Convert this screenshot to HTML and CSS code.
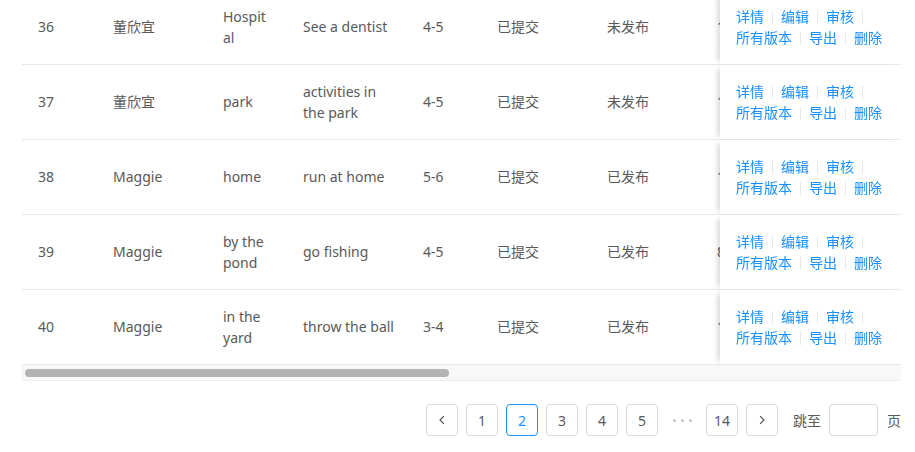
FILE: index.html
```html
<!DOCTYPE html>
<html lang="zh-CN">
<head>
<meta charset="utf-8">
<title>列表</title>
<link rel="stylesheet" href="styles.css">
</head>
<body>
<div class="page">
  <div class="table-scroll">
    <table class="data-table">
      <colgroup>
        <col class="c-id"><col class="c-name"><col class="c-place"><col class="c-act"><col class="c-age"><col class="c-status"><col class="c-pub"><col class="c-extra"><col class="c-extra"><col class="c-extra"><col class="c-extra"><col class="c-extra"><col class="c-ops">
      </colgroup>
      <tbody>
        <tr>
          <td>36</td><td>董欣宜</td><td class="wrap two">Hospital</td><td class="act">See a dentist</td><td>4-5</td><td>已提交</td><td>未发布</td><td>128</td><td>2019-08-12</td><td>英语绘本</td><td>中级</td><td>—</td>
          <td class="ops"><a href="#">详情</a><span class="divider"></span><a href="#">编辑</a><span class="divider"></span><a href="#">审核</a><span class="divider"></span><a href="#">所有版本</a><span class="divider"></span><a href="#">导出</a><span class="divider"></span><a href="#">删除</a></td>
        </tr>
        <tr>
          <td>37</td><td>董欣宜</td><td class="wrap">park</td><td class="act two">activities in the park</td><td>4-5</td><td>已提交</td><td>未发布</td><td>156</td><td>2019-08-12</td><td>英语绘本</td><td>中级</td><td>—</td>
          <td class="ops"><a href="#">详情</a><span class="divider"></span><a href="#">编辑</a><span class="divider"></span><a href="#">审核</a><span class="divider"></span><a href="#">所有版本</a><span class="divider"></span><a href="#">导出</a><span class="divider"></span><a href="#">删除</a></td>
        </tr>
        <tr>
          <td>38</td><td>Maggie</td><td class="wrap">home</td><td class="act">run at home</td><td>5-6</td><td>已提交</td><td>已发布</td><td>103</td><td>2019-08-10</td><td>英语绘本</td><td>高级</td><td>—</td>
          <td class="ops"><a href="#">详情</a><span class="divider"></span><a href="#">编辑</a><span class="divider"></span><a href="#">审核</a><span class="divider"></span><a href="#">所有版本</a><span class="divider"></span><a href="#">导出</a><span class="divider"></span><a href="#">删除</a></td>
        </tr>
        <tr>
          <td>39</td><td>Maggie</td><td class="wrap two">by the pond</td><td class="act">go fishing</td><td>4-5</td><td>已提交</td><td>已发布</td><td>89</td><td>2019-08-09</td><td>英语绘本</td><td>中级</td><td>—</td>
          <td class="ops"><a href="#">详情</a><span class="divider"></span><a href="#">编辑</a><span class="divider"></span><a href="#">审核</a><span class="divider"></span><a href="#">所有版本</a><span class="divider"></span><a href="#">导出</a><span class="divider"></span><a href="#">删除</a></td>
        </tr>
        <tr>
          <td>40</td><td>Maggie</td><td class="wrap two">in the yard</td><td class="act">throw the ball</td><td>3-4</td><td>已提交</td><td>已发布</td><td>112</td><td>2019-08-08</td><td>英语绘本</td><td>初级</td><td>—</td>
          <td class="ops"><a href="#">详情</a><span class="divider"></span><a href="#">编辑</a><span class="divider"></span><a href="#">审核</a><span class="divider"></span><a href="#">所有版本</a><span class="divider"></span><a href="#">导出</a><span class="divider"></span><a href="#">删除</a></td>
        </tr>
      </tbody>
    </table>
  </div>
  <div class="scrollbar"><div class="scrollbar-thumb" style="width: 48.5%"></div></div>

  <ul class="pagination">
    <li class="pg-item pg-arrow"><svg width="12" height="12" viewBox="0 0 12 12"><path d="M7.5 2.5 L4 6 L7.5 9.5" fill="none" stroke="#595959" stroke-width="1.2" stroke-linecap="round" stroke-linejoin="round"/></svg></li>
    <li class="pg-item">1</li>
    <li class="pg-item active">2</li>
    <li class="pg-item">3</li>
    <li class="pg-item">4</li>
    <li class="pg-item">5</li>
    <li class="pg-ellipsis"><span class="dot"></span><span class="dot"></span><span class="dot"></span></li>
    <li class="pg-item">14</li>
    <li class="pg-item pg-arrow"><svg width="12" height="12" viewBox="0 0 12 12"><path d="M4.5 2.5 L8 6 L4.5 9.5" fill="none" stroke="#595959" stroke-width="1.2" stroke-linecap="round" stroke-linejoin="round"/></svg></li>
    <li class="pg-jumper">跳至<input class="pg-input" type="text">页</li>
  </ul>
</div>
</body>
</html>
```

FILE: styles.css
```css
* { box-sizing: border-box; }

body {
  margin: 0;
  background: #fff;
  font-family: "Noto Sans", "Noto Sans CJK SC", sans-serif;
  font-size: 14px;
  line-height: 21px;
  color: #595959;
}

.page {
  padding: 0 14px 0 22px;
}

.table-scroll {
  margin-top: -10px;
  overflow: hidden;
}

.data-table {
  width: 1800px;
  table-layout: fixed;
  border-collapse: separate;
  border-spacing: 0;
}

.c-id { width: 75px; }
.c-name { width: 110px; }
.c-place { width: 80px; }
.c-act { width: 120px; }
.c-age { width: 74px; }
.c-status { width: 110px; }
.c-pub { width: 110px; }
.c-extra { width: 188px; }
.c-ops { width: 181px; }

.data-table td {
  padding: 15px 16px 17px;
  border-bottom: 1px solid #e8e8e8;
  vertical-align: middle;
  background: #fff;
}

.data-table td.wrap {
  overflow-wrap: anywhere;
}

.data-table td.two {
  padding-top: 16px;
  padding-bottom: 16px;
}

.data-table td.act {
  padding-right: 8px;
}

.data-table td.ops {
  position: sticky;
  right: 0;
  z-index: 2;
  padding-top: 16px;
  padding-bottom: 16px;
  box-shadow: -6px 0 6px -4px rgba(0, 0, 0, 0.18);
  font-family: "Noto Sans CJK SC", sans-serif;
}

.ops a {
  color: #1890ff;
  text-decoration: none;
  white-space: nowrap;
}

.divider {
  display: inline-block;
  width: 1px;
  height: 0.9em;
  margin: 0 8px;
  background: #e8e8e8;
  vertical-align: middle;
  position: relative;
  top: -1px;
}

.scrollbar {
  height: 16px;
  background: #f8f8f8;
  border-left: 1px solid #efefef;
  border-bottom: 1px solid #eeeeee;
  padding: 4px 2px 0;
}

.scrollbar-thumb {
  height: 8px;
  border-radius: 4px;
  background: #b3b3b3;
}

.pagination {
  list-style: none;
  margin: 23px 0 0;
  padding: 0;
  display: flex;
  justify-content: flex-end;
  align-items: center;
}

.pg-item {
  width: 32px;
  height: 32px;
  margin-right: 8px;
  border: 1px solid #d9d9d9;
  border-radius: 4px;
  display: flex;
  align-items: center;
  justify-content: center;
  color: #595959;
  background: #fff;
}

.pg-item.active {
  border-color: #1890ff;
  color: #1890ff;
}

.pg-ellipsis {
  width: 32px;
  height: 32px;
  margin-right: 8px;
  display: flex;
  align-items: center;
  justify-content: center;
  gap: 5px;
}

.dot {
  width: 3px;
  height: 3px;
  border-radius: 50%;
  background: #bfbfbf;
}

.pg-jumper {
  display: flex;
  align-items: center;
  margin-left: 7px;
  color: #595959;
}

.pg-input {
  width: 49px;
  height: 32px;
  margin: 0 9px 0 8px;
  border: 1px solid #d9d9d9;
  border-radius: 4px;
  font: inherit;
  padding: 4px 8px;
}
```
